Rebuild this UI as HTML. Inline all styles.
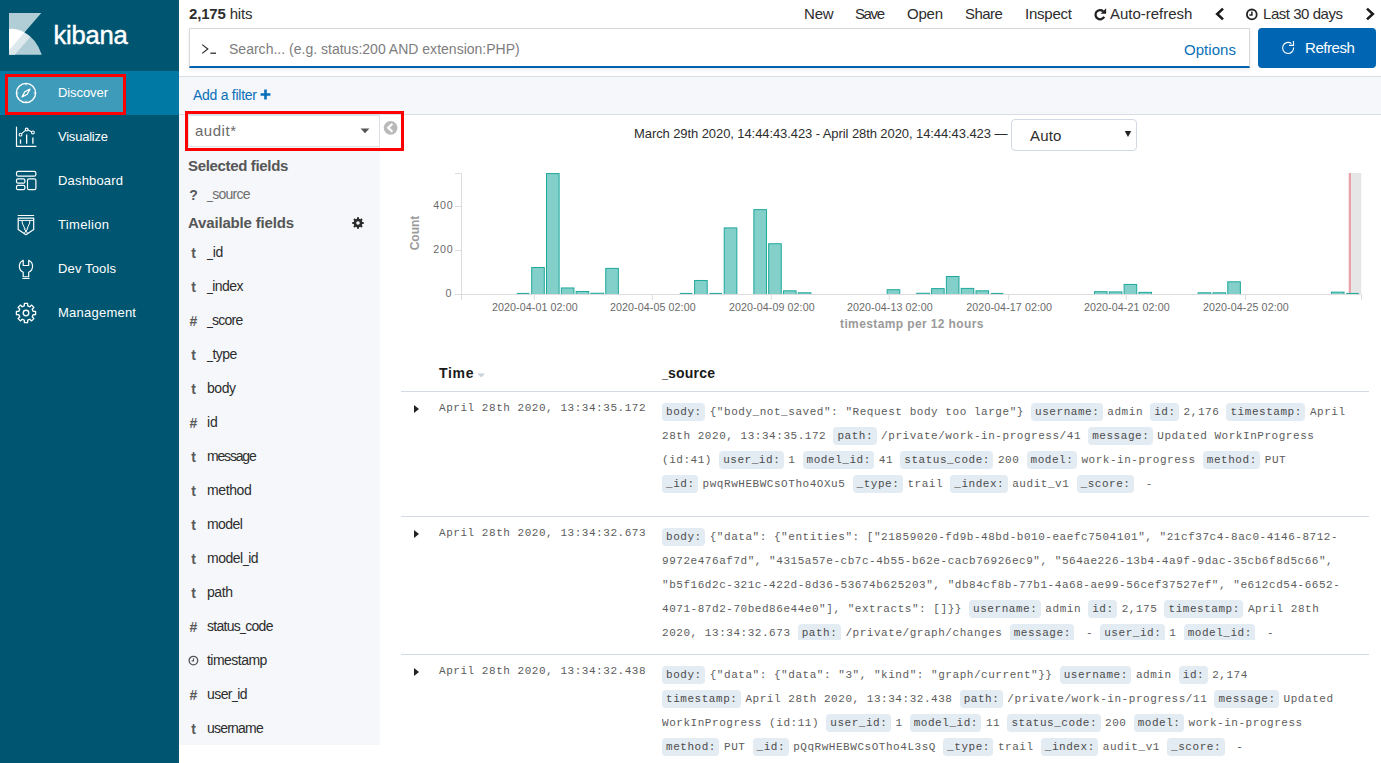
<!DOCTYPE html>
<html lang="en">
<head>
<meta charset="utf-8">
<title>Discover - Kibana</title>
<style>
*{box-sizing:border-box;margin:0;padding:0}
html,body{width:1381px;height:763px;overflow:hidden;background:#fff}
body{font-family:"Liberation Sans","DejaVu Sans",sans-serif;font-size:14px;color:#2d2d2d;position:relative}
.abs{position:absolute}
.t{position:absolute;white-space:nowrap;line-height:1}
/* sidebar */
#nav{position:absolute;left:0;top:0;width:179px;height:763px;background:#005571}
#nav .act{position:absolute;left:0;top:71px;width:179px;height:44px;background:#0079a5}
#nav .hov{position:absolute;left:8px;top:77px;width:115px;height:35px;background:#3f9bba}
#nav .lbl{position:absolute;left:58px;color:#fff;font-size:13px;line-height:16px;white-space:nowrap}
#nav svg{position:absolute}
.red{position:absolute;border:3px solid #fd0000}
/* top */
.menu{position:absolute;top:6px;font-size:15px;line-height:16px;color:#2d2d2d;white-space:nowrap}
#search{position:absolute;left:189px;top:28px;width:1061px;height:40px;background:#fff;border:1px solid #d9d9d9;border-bottom:2px solid #0062ae;box-shadow:0 2px 4px rgba(0,0,0,.08)}
#refresh{position:absolute;left:1258px;top:28px;width:118px;height:40px;background:#0066b3;border-radius:4px}
#fbar{position:absolute;left:179px;top:76px;width:1202px;height:39px;background:#f5f7fa;border-top:1px solid #d9dde4;border-bottom:1px solid #d9dde4}
#fields{position:absolute;left:179px;top:115px;width:201px;height:630px;background:#f5f7fa}
.fld{position:absolute;left:207px;font-size:14px;line-height:16px;color:#2d2d2d;white-space:nowrap}
.fty{position:absolute;left:188.5px;margin-top:1px;font-size:14px;line-height:16px;color:#5a5a5a;font-weight:bold;white-space:nowrap;width:10px;text-align:center}
.hdr{position:absolute;left:188px;font-size:15px;line-height:16px;font-weight:bold;color:#565656;white-space:nowrap}
/* table */
.rowline{position:absolute;left:401px;width:968px;height:1px;background:#d3dae6}
.mono{font-family:"Liberation Mono","DejaVu Sans Mono",monospace;font-size:11px;letter-spacing:0.54px;color:#5c5c5c}
.time{position:absolute;left:439px;white-space:nowrap;line-height:14px}
.src{position:absolute;left:662px;width:700px;line-height:24px;white-space:nowrap;overflow:hidden}
.src b{font-weight:normal;background:#e3ebf3;border-radius:4px;padding:3px 3.46px 3px 4px;margin-right:4.54px;color:#4c4c4c}
.arrow{position:absolute;left:414px;width:0;height:0;border-left:5px solid #222;border-top:4px solid transparent;border-bottom:4px solid transparent}
.ax{font-size:10.67px;line-height:12px;color:#6a6a6a}
.axt{font-size:12px;line-height:12px;font-weight:bold;color:#9a9a9a}
u{text-decoration:none;display:inline-block;transform:scaleX(.76);transform-origin:0 50%;margin-right:-1.9px}
</style>
</head>
<body>
<!-- SIDEBAR -->
<div id="nav">
  <div class="act"></div>
  <div class="hov"></div>
  
  <svg style="left:9px;top:13px" width="34" height="42" viewBox="0 0 34 42">
    <path d="M0,0H32.3L15.4,19.4Q27.5,25.5 32.8,41.8H0Z" fill="#b1ced7"/>
    <path d="M15.4,19.4Q18.6,21.2 21.2,24L5.8,41.8H0V37.5Z" fill="#dce8ec"/>
    <path d="M0,15.9Q8.5,15.3 15.4,19.4L0,37.7Z" fill="#ffffff"/>
  </svg>
  <div class="t" style="left:53.5px;top:20px;font-size:25.6px;color:#fff;line-height:30px;-webkit-text-stroke:0.45px #fff"><span style="letter-spacing:-0.244px">kibana</span></div>

  
  <svg style="left:14px;top:81px" width="24" height="24" viewBox="0 0 24 24" fill="none" stroke="#fff" stroke-width="1.1" stroke-linecap="round" stroke-linejoin="round">
    <circle cx="12" cy="12" r="9.6" stroke-width="1.4"/>
    <path d="M15.9,8.1L13.2,13.2L8.1,15.9L10.8,10.8Z" stroke-width="1.3"/>
    <path d="M12,2.6v1.3M12,20.1v1.3M2.6,12h1.3M20.1,12h1.3" stroke-width="1"/>
  </svg>
  <svg style="left:14px;top:125px" width="24" height="24" viewBox="0 0 24 24" fill="none" stroke="#fff" stroke-width="1.1" stroke-linecap="round" stroke-linejoin="round">
    <path d="M2.5,2.2V21.4H21.9" stroke-width="1.2"/>
    <path d="M6.5,14.6V18.8M12.65,9.6V18.8M18.9,12.6V18.8" stroke-width="1.3" stroke-linecap="butt"/>
    <circle cx="6.5" cy="9.65" r="1.4"/><circle cx="12.65" cy="4.5" r="1.4"/><circle cx="18.9" cy="7.45" r="1.4"/>
    <path d="M7.6,8.7L11.5,5.4M13.9,5.1L17.6,6.8"/>
  </svg>
  <svg style="left:14px;top:169px" width="24" height="24" viewBox="0 0 24 24" fill="none" stroke="#fff" stroke-width="1.1" stroke-linecap="round" stroke-linejoin="round">
    <rect x="2.5" y="2.4" width="19.4" height="4.8" rx="1.8" stroke-width="1.2"/>
    <rect x="2.5" y="9.8" width="8.4" height="4.4" rx="1.5" stroke-width="1.2"/>
    <rect x="2.5" y="16.3" width="8.4" height="4.4" rx="1.5" stroke-width="1.2"/>
    <rect x="13.5" y="9.8" width="8.4" height="10.9" rx="1.5" stroke-width="1.2"/>
  </svg>
  <svg style="left:14px;top:213px" width="24" height="24" viewBox="0 0 24 24" fill="none" stroke="#fff" stroke-width="1.1" stroke-linecap="round" stroke-linejoin="round">
    <path d="M4.2,2.5H19.7" stroke-width="1.2"/>
    <path d="M4.2,5.1H19.7V16.4L11.95,21.7L4.2,16.4Z" stroke-width="1.2"/>
    <path d="M5,7.4H18.9" stroke-width="1"/>
    <path d="M8.2,7.6V10L11,16M15.7,7.6V10L13,16M10.3,16L13.6,20.2M13.6,16L10.3,20.2" stroke-width="1"/>
  </svg>
  <svg style="left:14px;top:257px" width="24" height="24" viewBox="0 0 24 24" fill="none" stroke="#fff" stroke-width="1.1" stroke-linecap="round" stroke-linejoin="round">
    <path d="M9.2,3.3V8.5H14.7V3.3A6.6,6.6 0 0 1 14.7,15.3V19.75H9.2V15.3A6.6,6.6 0 0 1 9.2,3.3Z" stroke-width="1.2"/>
    <path d="M8.8,21.5H15.1" stroke-width="1.2"/>
  </svg>
  <svg style="left:14px;top:301px" width="24" height="24" viewBox="0 0 24 24" fill="none" stroke="#fff" stroke-width="1.1" stroke-linecap="round" stroke-linejoin="round">
    <path d="M10.24,4.92L10.41,2.43L13.59,2.43L13.76,4.92L15.77,5.75L17.64,4.11L19.89,6.36L18.25,8.23L19.08,10.24L21.57,10.41L21.57,13.59L19.08,13.76L18.25,15.77L19.89,17.64L17.64,19.89L15.77,18.25L13.76,19.08L13.59,21.57L10.41,21.57L10.24,19.08L8.23,18.25L6.36,19.89L4.11,17.64L5.75,15.77L4.92,13.76L2.43,13.59L2.43,10.41L4.92,10.24L5.75,8.23L4.11,6.36L6.36,4.11L8.23,5.75Z" stroke-width="1.35"/>
    <circle cx="12" cy="12" r="2.8" stroke-width="1.35"/>
  </svg>

  <div class="lbl" style="top:85px"><span style="letter-spacing:-0.083px">Discover</span></div>
  <div class="lbl" style="top:129px"><span style="letter-spacing:-0.225px">Visualize</span></div>
  <div class="lbl" style="top:173px"><span style="letter-spacing:0.174px">Dashboard</span></div>
  <div class="lbl" style="top:217px"><span style="letter-spacing:0.335px">Timelion</span></div>
  <div class="lbl" style="top:261px"><span style="letter-spacing:0.145px">Dev Tools</span></div>
  <div class="lbl" style="top:305px"><span style="letter-spacing:0.234px">Management</span></div>
</div>
<div class="red" style="left:5px;top:74px;width:121px;height:41px"></div>

<!-- TOP BAR -->
<div class="menu" style="left:189px"><span style="letter-spacing:-0.174px"><b>2,175</b> hits</span></div>
<div class="menu" style="left:804px"><span style="letter-spacing:-0.158px">New</span></div>
<div class="menu" style="left:855px"><span style="letter-spacing:-1.401px">Save</span></div>
<div class="menu" style="left:907px"><span style="letter-spacing:-0.201px">Open</span></div>
<div class="menu" style="left:965px"><span style="letter-spacing:-0.558px">Share</span></div>
<div class="menu" style="left:1025px"><span style="letter-spacing:-0.229px">Inspect</span></div>
<div class="menu" style="left:1110px"><span style="letter-spacing:-0.013px">Auto-refresh</span></div>
<div class="menu" style="left:1263px"><span style="letter-spacing:-0.460px">Last 30 days</span></div>

<div id="search"></div>
<div class="t" style="left:229px;top:42px;font-size:14px;color:#7d7d7d"><span style="letter-spacing:0.011px">Search... (e.g. status:200 AND extension:PHP)</span></div>
<div class="t" style="left:1184px;top:42px;font-size:15px;color:#0a6fb8"><span style="letter-spacing:0.049px">Options</span></div>
<div id="refresh"></div>
<div class="t" style="left:1305px;top:40px;font-size:15px;color:#fff"><span style="letter-spacing:-0.455px">Refresh</span></div>

<!-- FILTER BAR -->
<div id="fbar"></div>
<div class="t" style="left:193px;top:88px;font-size:14px;color:#0a6fb8"><span style="letter-spacing:-0.267px">Add a filter</span></div>


<svg class="abs" style="left:1093px;top:8px" width="14" height="13" viewBox="0 0 14 13">
  <path d="M10.2,3.3A4.6,4.6 0 1 0 11.2,8.8" fill="none" stroke="#222" stroke-width="2.3"/>
  <path d="M7.6,5.8H13.1V0.3Z" fill="#222"/>
</svg>
<svg class="abs" style="left:1214px;top:7px" width="12" height="14" viewBox="0 0 12 14">
  <path d="M9,1.6L3.2,7L9,12.4" fill="none" stroke="#1a1a1a" stroke-width="2.6"/>
</svg>
<svg class="abs" style="left:1364px;top:7px" width="12" height="14" viewBox="0 0 12 14">
  <path d="M3,1.6L8.8,7L3,12.4" fill="none" stroke="#1a1a1a" stroke-width="2.6"/>
</svg>
<svg class="abs" style="left:1245px;top:8px" width="14" height="13" viewBox="0 0 14 13">
  <circle cx="6.8" cy="6.4" r="4.9" fill="none" stroke="#222" stroke-width="1.8"/>
  <path d="M6.9,3.4V6.9H4.4" fill="none" stroke="#222" stroke-width="1.5"/>
</svg>
<!-- search prompt -->
<svg class="abs" style="left:200px;top:42px" width="18" height="14" viewBox="0 0 18 14">
  <path d="M2.2,2.6L7.8,7L2.2,11.4" fill="none" stroke="#2d2d2d" stroke-width="1.2"/>
  <path d="M10.4,11.2H16" fill="none" stroke="#2d2d2d" stroke-width="1.3"/>
</svg>
<!-- refresh btn icon -->
<svg class="abs" style="left:1281px;top:40px" width="15" height="15" viewBox="0 0 15 15">
  <path d="M12.58,7.47A5.5,5.5 0 1 1 10.33,3.5" fill="none" stroke="#fff" stroke-width="1.15"/>
  <path d="M12.5,1V5.4H8" fill="none" stroke="#fff" stroke-width="1.15"/>
</svg>
<!-- add filter plus -->
<svg class="abs" style="left:260px;top:89px" width="11" height="11" viewBox="0 0 11 11">
  <path d="M5.5,0.6V10.4M0.6,5.5H10.4" fill="none" stroke="#0a6fb8" stroke-width="2.6"/>
</svg>

<!-- FIELD LIST -->
<div id="fields"></div>

<div class="abs" style="left:188px;top:115px;width:192px;height:32px;background:#fff;border:1px solid #dde1e8"></div>
<div class="t" style="left:195px;top:122px;font-size:15px;color:#6a6a6a;line-height:17px"><span style="letter-spacing:0.525px">audit*</span></div>
<svg class="abs" style="left:360px;top:128px" width="10" height="6" viewBox="0 0 10 6"><path d="M0.6,0.6H9.4L5,5.2Z" fill="#555"/></svg>
<svg class="abs" style="left:383px;top:120px" width="16" height="16" viewBox="0 0 16 16">
  <circle cx="7.6" cy="7.8" r="6.9" fill="#b9b9b9"/>
  <path d="M9.4,3.8L5.2,7.8L9.4,11.8" fill="none" stroke="#fff" stroke-width="2.2"/>
</svg>
<div class="red" style="left:185px;top:111px;width:219px;height:40px;border-width:3.5px"></div>
<div class="hdr" style="top:158px"><span style="letter-spacing:-0.339px">Selected fields</span></div>
<div class="fty" style="top:186px">?</div>
<div class="fld" style="top:186px;color:#6f6f6f"><span style="letter-spacing:-0.723px"><u>_</u>source</span></div>
<div class="hdr" style="top:215px"><span style="letter-spacing:-0.170px">Available fields</span></div>
<svg class="abs" style="left:352px;top:217px" width="12" height="12" viewBox="0 0 12 12">
  <path d="M4.94,1.73L5.05,0.28L6.95,0.28L7.06,1.73L8.27,2.23L9.37,1.28L10.72,2.63L9.77,3.73L10.27,4.94L11.72,5.05L11.72,6.95L10.27,7.06L9.77,8.27L10.72,9.37L9.37,10.72L8.27,9.77L7.06,10.27L6.95,11.72L5.05,11.72L4.94,10.27L3.73,9.77L2.63,10.72L1.28,9.37L2.23,8.27L1.73,7.06L0.28,6.95L0.28,5.05L1.73,4.94L2.23,3.73L1.28,2.63L2.63,1.28L3.73,2.23ZM6,4.2A1.8,1.8 0 1 0 6,7.8A1.8,1.8 0 1 0 6,4.2Z" fill="#2b2b2b" fill-rule="evenodd"/>
</svg>
<div class="fty" style="top:244px">t</div>
<div class="fld" style="top:244px"><span style="letter-spacing:-0.256px"><u>_</u>id</span></div>
<div class="fty" style="top:278px">t</div>
<div class="fld" style="top:278px"><span style="letter-spacing:-0.575px"><u>_</u>index</span></div>
<div class="fty" style="top:312px">#</div>
<div class="fld" style="top:312px"><span style="letter-spacing:-0.788px"><u>_</u>score</span></div>
<div class="fty" style="top:346px">t</div>
<div class="fld" style="top:346px"><span style="letter-spacing:-0.494px"><u>_</u>type</span></div>
<div class="fty" style="top:380px">t</div>
<div class="fld" style="top:380px"><span style="letter-spacing:-0.453px">body</span></div>
<div class="fty" style="top:414px">#</div>
<div class="fld" style="top:414px"><span style="letter-spacing:-0.006px">id</span></div>
<div class="fty" style="top:448px">t</div>
<div class="fld" style="top:448px"><span style="letter-spacing:-1.185px">message</span></div>
<div class="fty" style="top:482px">t</div>
<div class="fld" style="top:482px"><span style="letter-spacing:-0.401px">method</span></div>
<div class="fty" style="top:516px">t</div>
<div class="fld" style="top:516px"><span style="letter-spacing:-0.560px">model</span></div>
<div class="fty" style="top:550px">t</div>
<div class="fld" style="top:550px"><span style="letter-spacing:-0.479px">model<u>_</u>id</span></div>
<div class="fty" style="top:584px">t</div>
<div class="fld" style="top:584px"><span style="letter-spacing:-0.417px">path</span></div>
<div class="fty" style="top:618px">#</div>
<div class="fld" style="top:618px"><span style="letter-spacing:-0.722px">status<u>_</u>code</span></div>
<svg class="abs" style="left:188px;top:655px" width="12" height="12" viewBox="0 0 12 12"><circle cx="5.4" cy="5.6" r="4.3" fill="none" stroke="#555" stroke-width="1.3"/><path d="M5.5,3.2V5.9H3.6" fill="none" stroke="#555" stroke-width="1.1"/></svg>
<div class="fld" style="top:652px"><span style="letter-spacing:-0.522px">timestamp</span></div>
<div class="fty" style="top:686px">#</div>
<div class="fld" style="top:686px"><span style="letter-spacing:-0.574px">user<u>_</u>id</span></div>
<div class="fty" style="top:720px">t</div>
<div class="fld" style="top:720px"><span style="letter-spacing:-0.781px">username</span></div>


<!-- CHART -->

<div class="t" style="left:634px;top:126px;font-size:13px;line-height:15px;color:#2d2d2d"><span style="letter-spacing:-0.086px">March 29th 2020, 14:44:43.423 - April 28th 2020, 14:44:43.423 —</span></div>
<div class="abs" style="left:1011px;top:119px;width:126px;height:32px;border:1px solid #d3d9e2;border-radius:4px;background:#fff"></div>
<div class="t" style="left:1030px;top:127px;font-size:15px;line-height:17px;color:#2d2d2d"><span style="letter-spacing:0.180px">Auto</span></div>
<svg class="abs" style="left:1124px;top:130px" width="8" height="8" viewBox="0 0 8 8"><path d="M0.8,1H7.2L4,7Z" fill="#222"/></svg>
<svg class="abs" style="left:400px;top:160px" width="981" height="180" viewBox="400 160 981 180">
<rect x="1351" y="173" width="10.3" height="121.5" fill="#e6e6e6"/>
<rect x="1348.7" y="173" width="2.3" height="121.5" fill="#eaa3a8"/>
<rect x="516.89" y="292.90" width="12.6" height="1.6" fill="#2aab9f"/>
<rect x="531.70" y="267.50" width="12.6" height="27.00" fill="#83d0ca" stroke="#1ea89c" stroke-width="1"/>
<rect x="546.51" y="173.56" width="12.6" height="120.94" fill="#83d0ca" stroke="#1ea89c" stroke-width="1"/>
<rect x="561.32" y="287.96" width="12.6" height="6.54" fill="#83d0ca" stroke="#1ea89c" stroke-width="1"/>
<rect x="576.13" y="291.48" width="12.6" height="3.02" fill="#83d0ca" stroke="#1ea89c" stroke-width="1"/>
<rect x="590.94" y="293.24" width="12.6" height="1.26" fill="#83d0ca" stroke="#1ea89c" stroke-width="1"/>
<rect x="605.75" y="268.38" width="12.6" height="26.12" fill="#83d0ca" stroke="#1ea89c" stroke-width="1"/>
<rect x="679.80" y="292.90" width="12.6" height="1.6" fill="#2aab9f"/>
<rect x="694.61" y="280.48" width="12.6" height="14.02" fill="#83d0ca" stroke="#1ea89c" stroke-width="1"/>
<rect x="709.42" y="292.90" width="12.6" height="1.6" fill="#2aab9f"/>
<rect x="724.23" y="227.90" width="12.6" height="66.60" fill="#83d0ca" stroke="#1ea89c" stroke-width="1"/>
<rect x="753.85" y="209.64" width="12.6" height="84.86" fill="#83d0ca" stroke="#1ea89c" stroke-width="1"/>
<rect x="768.66" y="243.74" width="12.6" height="50.76" fill="#83d0ca" stroke="#1ea89c" stroke-width="1"/>
<rect x="783.47" y="290.82" width="12.6" height="3.68" fill="#83d0ca" stroke="#1ea89c" stroke-width="1"/>
<rect x="798.28" y="292.80" width="12.6" height="1.70" fill="#83d0ca" stroke="#1ea89c" stroke-width="1"/>
<rect x="887.14" y="289.72" width="12.6" height="4.78" fill="#83d0ca" stroke="#1ea89c" stroke-width="1"/>
<rect x="916.76" y="293.24" width="12.6" height="1.26" fill="#83d0ca" stroke="#1ea89c" stroke-width="1"/>
<rect x="931.57" y="288.62" width="12.6" height="5.88" fill="#83d0ca" stroke="#1ea89c" stroke-width="1"/>
<rect x="946.38" y="276.52" width="12.6" height="17.98" fill="#83d0ca" stroke="#1ea89c" stroke-width="1"/>
<rect x="961.19" y="288.40" width="12.6" height="6.10" fill="#83d0ca" stroke="#1ea89c" stroke-width="1"/>
<rect x="976.00" y="290.82" width="12.6" height="3.68" fill="#83d0ca" stroke="#1ea89c" stroke-width="1"/>
<rect x="990.81" y="292.90" width="12.6" height="1.6" fill="#2aab9f"/>
<rect x="1094.48" y="291.70" width="12.6" height="2.80" fill="#83d0ca" stroke="#1ea89c" stroke-width="1"/>
<rect x="1109.29" y="291.92" width="12.6" height="2.58" fill="#83d0ca" stroke="#1ea89c" stroke-width="1"/>
<rect x="1124.10" y="284.44" width="12.6" height="10.06" fill="#83d0ca" stroke="#1ea89c" stroke-width="1"/>
<rect x="1138.91" y="292.36" width="12.6" height="2.14" fill="#83d0ca" stroke="#1ea89c" stroke-width="1"/>
<rect x="1198.15" y="292.80" width="12.6" height="1.70" fill="#83d0ca" stroke="#1ea89c" stroke-width="1"/>
<rect x="1212.96" y="292.80" width="12.6" height="1.70" fill="#83d0ca" stroke="#1ea89c" stroke-width="1"/>
<rect x="1227.77" y="281.80" width="12.6" height="12.70" fill="#83d0ca" stroke="#1ea89c" stroke-width="1"/>
<rect x="1331.44" y="292.14" width="12.6" height="2.36" fill="#83d0ca" stroke="#1ea89c" stroke-width="1"/>
<rect x="1346.25" y="292.90" width="12.6" height="1.6" fill="#2aab9f"/>
<path d="M455,173.5H461.5V300M455,206.5H461.5M455,250.5H461.5M455,294.5H1361.5V300" fill="none" stroke="#dcdcdc" stroke-width="1"/>
<path d="M534.3,294.5V300M652.3,294.5V300M771.3,294.5V300M889.3,294.5V300M1008.7,294.5V300M1126.3,294.5V300M1245.4,294.5V300" fill="none" stroke="#dcdcdc" stroke-width="1"/>
</svg>
<div class="t ax" style="left:433.3px;top:198.5px"><span style="letter-spacing:0.759px">400</span></div>
<div class="t ax" style="left:433.3px;top:242.5px"><span style="letter-spacing:0.759px">200</span></div>
<div class="t ax" style="left:445.5px;top:286.5px"><span style="letter-spacing:1.162px">0</span></div>
<div class="t ax" style="left:491.9px;top:301px"><span style="letter-spacing:0.104px">2020-04-01 02:00</span></div>
<div class="t ax" style="left:609.9px;top:301px"><span style="letter-spacing:0.104px">2020-04-05 02:00</span></div>
<div class="t ax" style="left:728.9px;top:301px"><span style="letter-spacing:0.104px">2020-04-09 02:00</span></div>
<div class="t ax" style="left:846.9px;top:301px"><span style="letter-spacing:0.104px">2020-04-13 02:00</span></div>
<div class="t ax" style="left:966.3px;top:301px"><span style="letter-spacing:0.104px">2020-04-17 02:00</span></div>
<div class="t ax" style="left:1083.9px;top:301px"><span style="letter-spacing:0.104px">2020-04-21 02:00</span></div>
<div class="t ax" style="left:1203.0px;top:301px"><span style="letter-spacing:0.104px">2020-04-25 02:00</span></div>
<div class="t axt" style="left:840px;top:318px"><span style="letter-spacing:0.387px">timestamp per 12 hours</span></div>
<div class="t axt" style="left:395px;top:227px;width:40px;text-align:center;transform:rotate(-90deg);transform-origin:50% 50%">Count</div>


<!-- TABLE -->

<div class="t" style="left:439px;top:365px;font-size:14px;line-height:17px;font-weight:bold;color:#1a1a1a"><span style="letter-spacing:0.688px">Time</span></div>
<svg class="abs" style="left:477px;top:373px" width="9" height="5" viewBox="0 0 9 5"><path d="M0.4,0.4H8L4.2,4.4Z" fill="#c8d1de"/></svg>
<div class="t" style="left:662px;top:365px;font-size:14px;line-height:17px;font-weight:bold;color:#1a1a1a"><span style="letter-spacing:0.195px"><u>_</u>source</span></div>
<div class="rowline" style="top:391px"></div>
<div class="rowline" style="top:516px"></div>
<div class="rowline" style="top:654px"></div>
<div class="arrow" style="top:405px"></div>
<div class="time mono" style="top:400.6px">April 28th 2020, 13:34:35.172</div>
<div class="src mono" style="top:400px;height:96px">
  <div><b>body:</b>{"body_not_saved": "Request body too large"} <b>username:</b>admin <b>id:</b>2,176 <b>timestamp:</b>April</div>
  <div>28th 2020, 13:34:35.172 <b>path:</b>/private/work-in-progress/41 <b>message:</b>Updated WorkInProgress</div>
  <div>(id:41) <b>user_id:</b>1 <b>model_id:</b>41 <b>status_code:</b>200 <b>model:</b>work-in-progress <b>method:</b>PUT</div>
  <div><b>_id:</b>pwqRwHEBWCsOTho4OXu5 <b>_type:</b>trail <b>_index:</b>audit_v1 <b>_score:</b> - </div>
</div>
<div class="arrow" style="top:530px"></div>
<div class="time mono" style="top:525.6px">April 28th 2020, 13:34:32.673</div>
<div class="src mono" style="top:525px;height:115px">
  <div><b>body:</b>{"data": {"entities": ["21859020-fd9b-48bd-b010-eaefc7504101", "21cf37c4-8ac0-4146-8712-</div>
  <div>9972e476af7d", "4315a57e-cb7c-4b55-b62e-cacb76926ec9", "564ae226-13b4-4a9f-9dac-35cb6f8d5c66",</div>
  <div>"b5f16d2c-321c-422d-8d36-53674b625203", "db84cf8b-77b1-4a68-ae99-56cef37527ef", "e612cd54-6652-</div>
  <div>4071-87d2-70bed86e44e0"], "extracts": []}} <b>username:</b>admin <b>id:</b>2,175 <b>timestamp:</b>April 28th</div>
  <div>2020, 13:34:32.673 <b>path:</b>/private/graph/changes <b>message:</b> - <b>user_id:</b>1 <b>model_id:</b> - </div>
</div>
<div class="arrow" style="top:668px"></div>
<div class="time mono" style="top:663.6px">April 28th 2020, 13:34:32.438</div>
<div class="src mono" style="top:663px;height:100px">
  <div><b>body:</b>{"data": {"data": "3", "kind": "graph/current"}} <b>username:</b>admin <b>id:</b>2,174</div>
  <div><b>timestamp:</b>April 28th 2020, 13:34:32.438 <b>path:</b>/private/work-in-progress/11 <b>message:</b>Updated</div>
  <div>WorkInProgress (id:11) <b>user_id:</b>1 <b>model_id:</b>11 <b>status_code:</b>200 <b>model:</b>work-in-progress</div>
  <div><b>method:</b>PUT <b>_id:</b>pQqRwHEBWCsOTho4L3sQ <b>_type:</b>trail <b>_index:</b>audit_v1 <b>_score:</b> - </div>
</div>

</body>
</html>
